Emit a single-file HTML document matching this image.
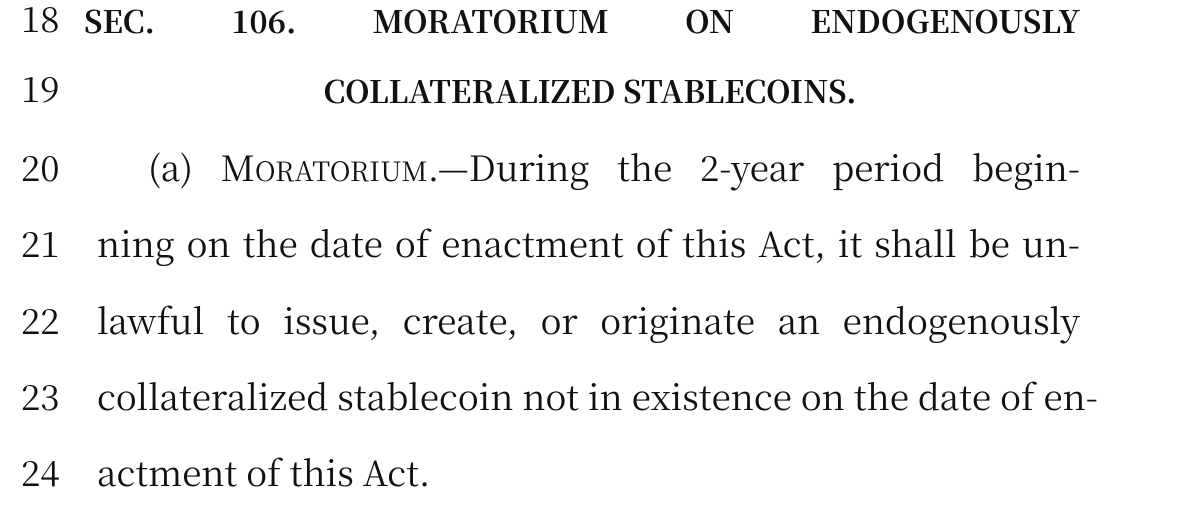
<!DOCTYPE html>
<html><head><meta charset="utf-8"><style>
html,body{margin:0;padding:0;background:#fff;width:1200px;height:522px;overflow:hidden;}
body{position:relative;font-family:"Noto Serif CJK SC","Liberation Serif",serif;color:#111;}
.n,.t,.h{font-family:"Noto Serif CJK SC","Liberation Serif",serif;}
.n{position:absolute;left:21px;font-size:35px;line-height:40px;}
.t{position:absolute;left:97px;width:983px;font-size:35px;line-height:40px;text-align:justify;text-align-last:justify;white-space:nowrap;}
.h{position:absolute;font-size:31px;line-height:30px;font-weight:bold;}
.sc{font-size:27px;}
</style></head><body>
<div class="n" style="top:-2px">18</div>
<div class="h" style="left:84px;width:996px;top:5px;text-align:justify;text-align-last:justify">SEC. 106. MORATORIUM ON ENDOGENOUSLY</div>
<div class="n" style="top:68px">19</div>
<div class="h" style="left:0;width:1180px;top:75px;text-align:center">COLLATERALIZED STABLECOINS.</div>
<div class="n" style="top:147px">20</div>
<div class="t" style="left:148px;width:932px;top:147px">(a) M<span class="sc">ORATORIUM</span>.—During the 2-year period begin-</div>
<div class="n" style="top:223px">21</div>
<div class="t" style="top:223px">ning on the date of enactment of this Act, it shall be un-</div>
<div class="n" style="top:300px">22</div>
<div class="t" style="top:300px">lawful to issue, create, or originate an endogenously</div>
<div class="n" style="top:376px">23</div>
<div class="t" style="top:376px">collateralized stablecoin not in existence on the date of en-</div>
<div class="n" style="top:452px">24</div>
<div class="t" style="top:452px;text-align-last:left">actment of this Act.</div>
</body></html>
